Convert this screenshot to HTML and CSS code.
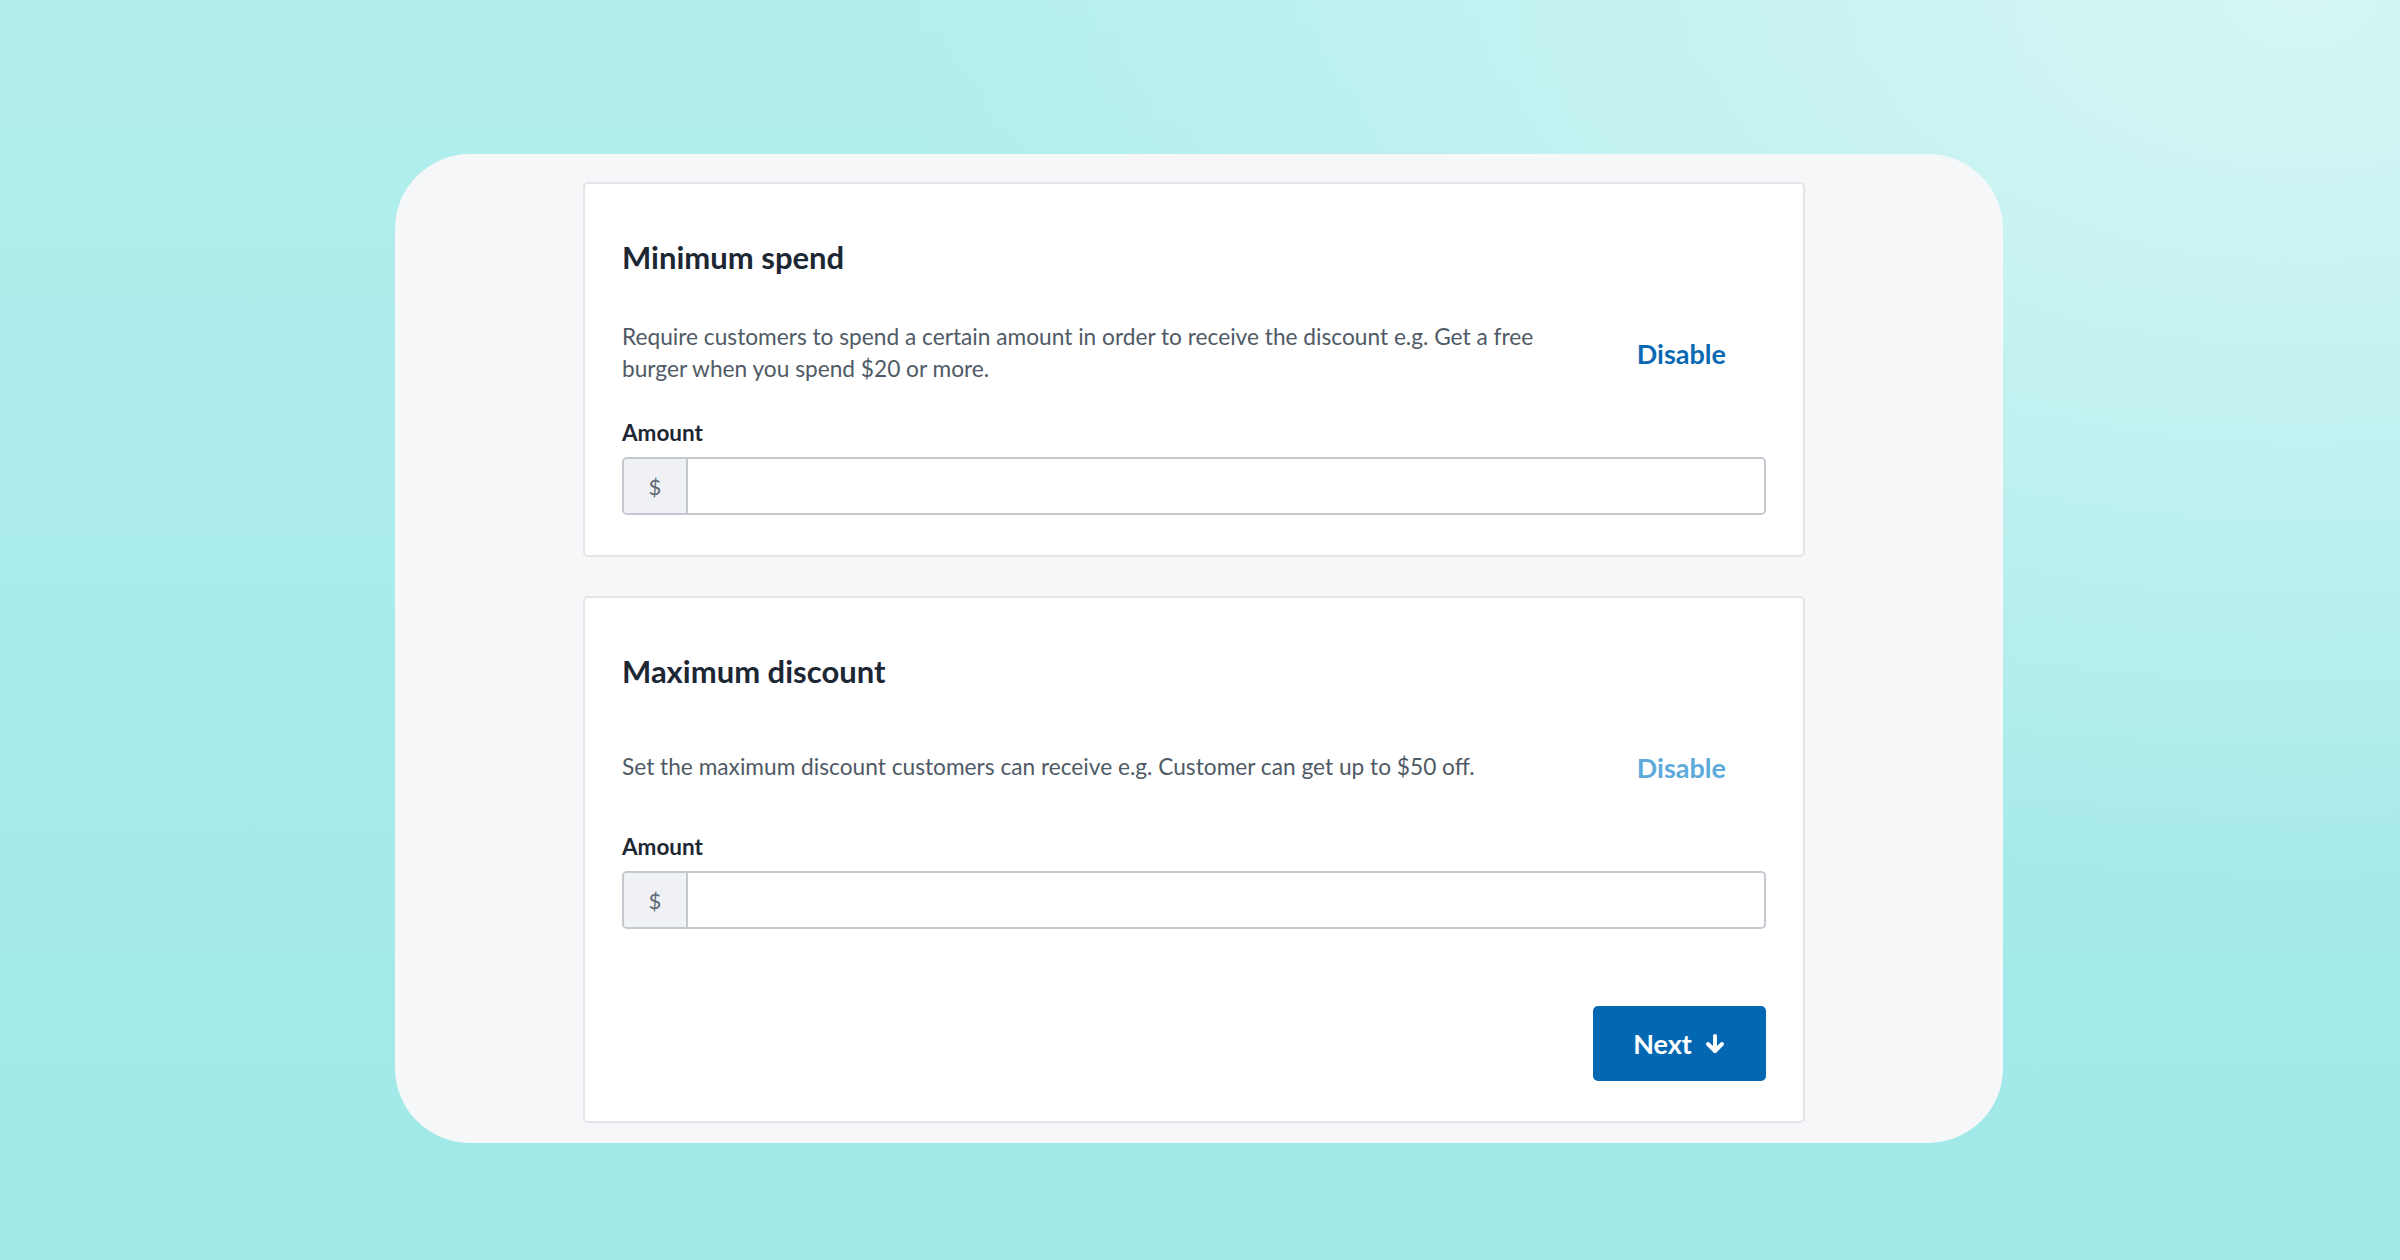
FILE: index.html
```html
<!DOCTYPE html>
<html lang="en">
<head>
    <meta charset="UTF-8">
    <meta name="viewport" content="width=device-width, initial-scale=1.0">
    <title>Discount conditions</title>
    <link rel="stylesheet" href="styles.css">
</head>
<body>
    <div class="panel">
        <section class="card">
            <h2 class="card-title">Minimum spend</h2>
            <div class="card-row">
                <p class="card-desc">Require customers to spend a certain amount in order to receive the discount e.g. Get a free burger when you spend $20 or more.</p>
                <button class="link-btn">Disable</button>
            </div>
            <label class="field-label" for="minSpend">Amount</label>
            <div class="money-input">
                <span class="money-prefix">$</span>
                <input type="text" id="minSpend">
            </div>
        </section>

        <section class="card">
            <h2 class="card-title">Maximum discount</h2>
            <div class="card-row">
                <p class="card-desc">Set the maximum discount customers can receive e.g. Customer can get up to $50 off.</p>
                <button class="link-btn link-btn--muted">Disable</button>
            </div>
            <label class="field-label" for="maxDiscount">Amount</label>
            <div class="money-input">
                <span class="money-prefix">$</span>
                <input type="text" id="maxDiscount">
            </div>
            <div class="card-actions">
                <button class="primary-btn">
                    Next
                    <svg width="22" height="22" viewBox="0 0 22 22" fill="none" stroke="currentColor" stroke-width="4" stroke-linecap="round" stroke-linejoin="round">
                        <path d="M11 3v15"/>
                        <path d="M4 11l7 7 7-7"/>
                    </svg>
                </button>
            </div>
        </section>
    </div>
</body>
</html>
```

FILE: styles.css
```css
* {
    box-sizing: border-box;
}

html, body {
    height: 100%;
}

body {
    margin: 0;
    font-family: 'Lato', 'Noto Sans', sans-serif;
    color: #1d2733;
    background:
        radial-gradient(ellipse 1400px 900px at 2300px 0px, rgba(215, 247, 245, 0.95), rgba(215, 247, 245, 0) 100%),
        linear-gradient(180deg, #b3eeee 0%, #a0e8e8 100%);
    overflow: hidden;
}

.panel {
    width: 1608px;
    height: 989px;
    margin: 154px 0 0 395px;
    padding: 28px 0 0 188px;
    background: #f6f7f9;
    border-radius: 75px;
    overflow: hidden;
    display: flex;
    flex-direction: column;
    gap: 39px;
}

.card {
    width: 1222px;
    flex-shrink: 0;
    background: #fff;
    border: 2px solid #e3e5e8;
    border-radius: 5px;
    padding: 0 37px 40px;
    display: flex;
    flex-direction: column;
}

.card-title {
    margin: 55px 0 0;
    font-size: 31px;
    line-height: 36px;
    font-weight: 700;
    color: #1d2733;
}

.card-row {
    margin-top: 46px;
    height: 64px;
    display: flex;
    align-items: center;
}

.card-desc {
    flex: 1;
    margin: 0;
    padding-right: 20px;
    font-size: 22.7px;
    line-height: 32px;
    color: #4f5a66;
}

.link-btn {
    background: none;
    border: none;
    padding: 0 40px;
    font-family: inherit;
    font-size: 27px;
    font-weight: 700;
    color: #0b69b3;
    cursor: pointer;
}

.link-btn--muted {
    color: #5daadb;
}

.field-label {
    margin-top: 34px;
    font-size: 22.5px;
    line-height: 28px;
    font-weight: 700;
    color: #1d2733;
}

.money-input {
    margin-top: 10px;
    height: 58px;
    display: flex;
    border: 2px solid #c4c9d0;
    border-radius: 5px;
    overflow: hidden;
}

.money-prefix {
    width: 64px;
    display: flex;
    align-items: center;
    justify-content: center;
    background: #eff1f4;
    border-right: 2px solid #c4c9d0;
    font-size: 22px;
    color: #5d6874;
}

.money-input input {
    flex: 1;
    border: none;
    outline: none;
    padding: 0 16px;
    font-family: inherit;
    font-size: 22px;
}

.card-actions {
    margin-top: 77px;
    display: flex;
    justify-content: flex-end;
}

.primary-btn {
    width: 173px;
    height: 75px;
    display: flex;
    align-items: center;
    justify-content: center;
    gap: 12px;
    background: #0467b1;
    color: #fff;
    border: none;
    border-radius: 5px;
    font-family: inherit;
    font-size: 27px;
    font-weight: 700;
    cursor: pointer;
}
```
